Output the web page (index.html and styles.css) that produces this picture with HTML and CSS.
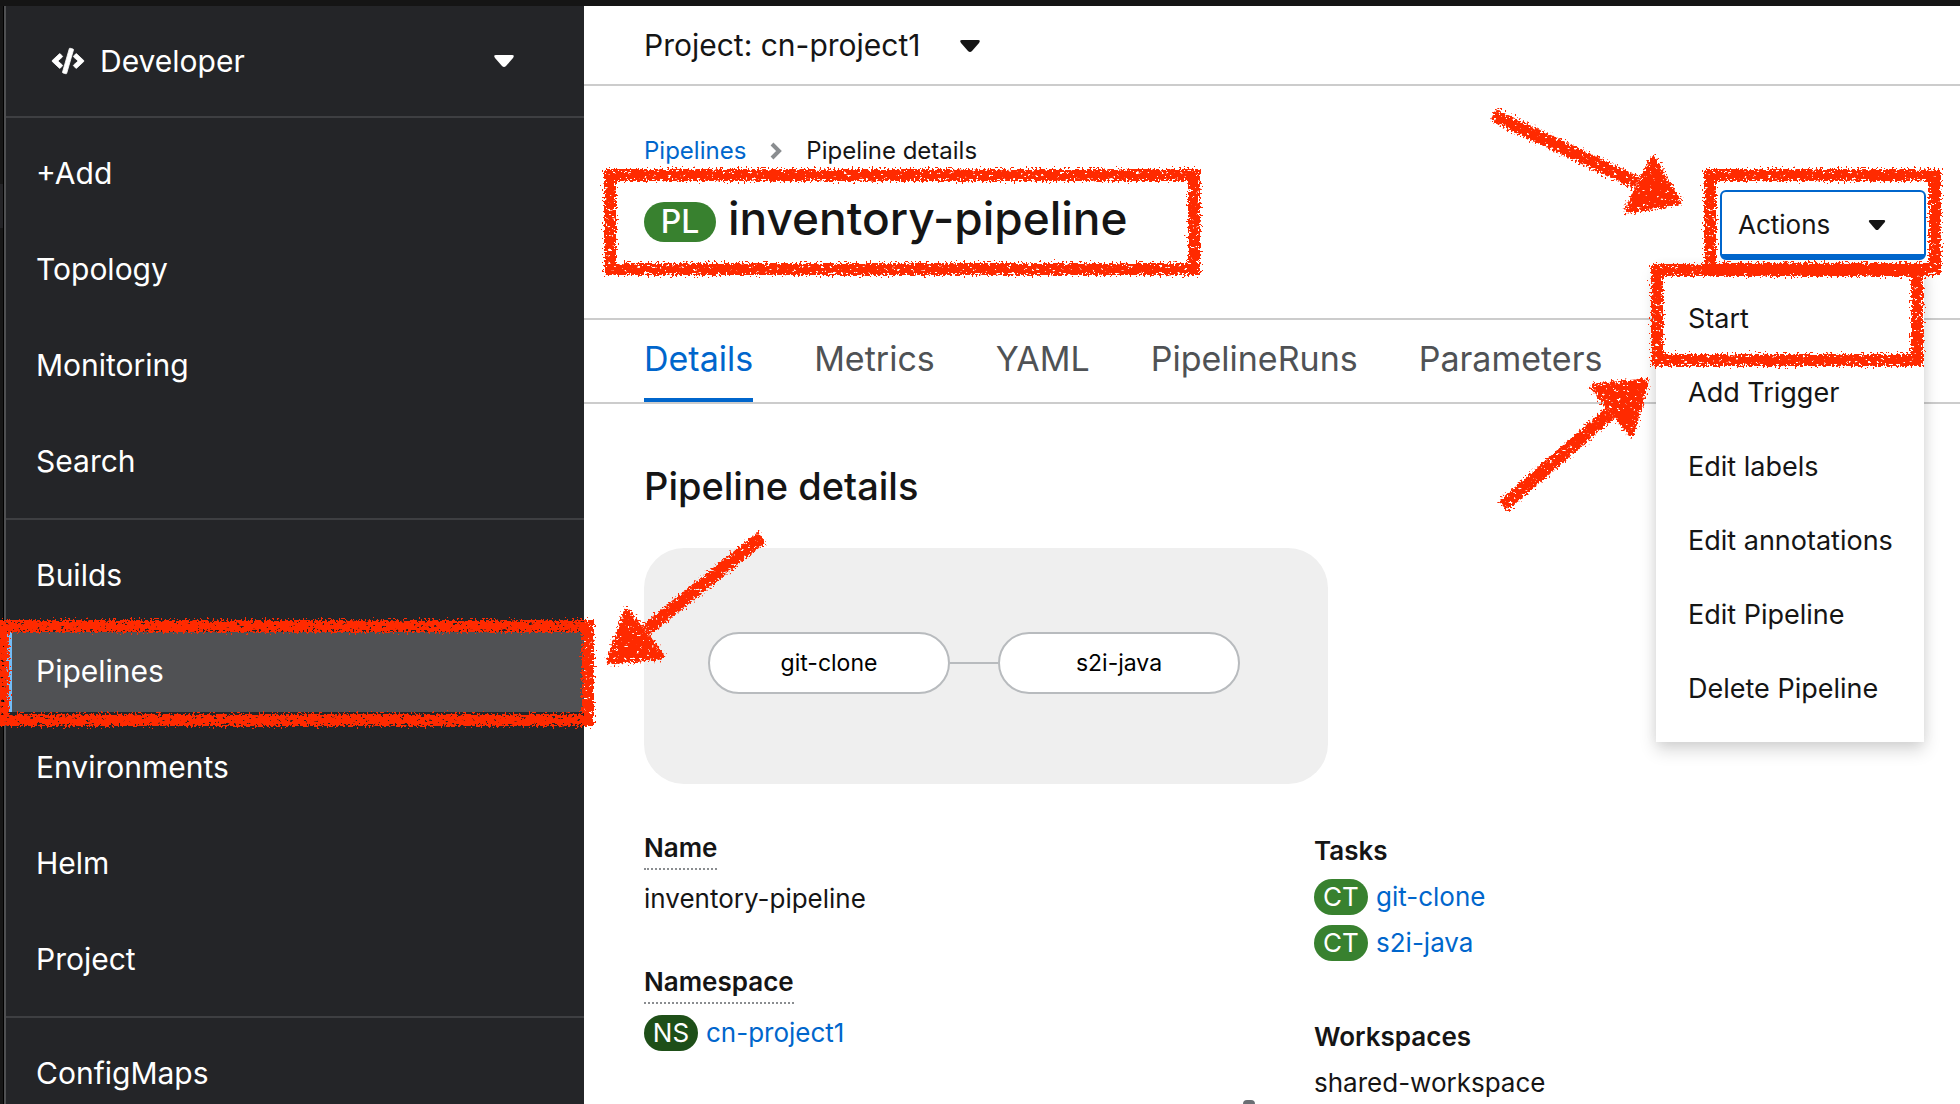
FILE: index.html
```html
<!DOCTYPE html>
<html lang="en">
<head>
<meta charset="utf-8">
<title>inventory-pipeline · Pipeline details</title>
<link rel="stylesheet" href="styles.css">
</head>
<body>
<svg class="defs" aria-hidden="true">
  <filter id="chalk" x="-5%" y="-15%" width="110%" height="130%">
    <feTurbulence type="fractalNoise" baseFrequency="0.5" numOctaves="2" seed="7" result="noise"/>
    <feDisplacementMap in="SourceGraphic" in2="noise" scale="12" xChannelSelector="R" yChannelSelector="G" result="rough"/>
    <feTurbulence type="fractalNoise" baseFrequency="0.25 0.35" numOctaves="3" seed="21" result="grain"/>
    <feColorMatrix in="grain" type="matrix" values="0 0 0 0 0  0 0 0 0 0  0 0 0 0 0  14 0 0 0 -3.5" result="mask"/>
    <feComposite in="rough" in2="mask" operator="in"/>
  </filter>
</svg>
<div class="topbar"></div>
<div class="app">
  <div class="edge"></div>
  <aside class="sidebar">
    <button class="perspective" type="button">
      <svg class="code-icon" viewBox="0 0 640 512" fill="currentColor" stroke="currentColor" stroke-width="16" aria-hidden="true"><path d="M278.900 511.500l-61-17.700c-6.400-1.800-10-8.500-8.200-14.900L346.200 8.700c1.800-6.400 8.500-10 14.900-8.200l61 17.700c6.400 1.800 10 8.500 8.200 14.900L293.800 503.300c-1.900 6.400-8.500 10.100-14.900 8.200zm-114-112.200l43.500-46.400c4.600-4.900 4.300-12.700-.8-17.200L117 256l90.600-79.700c5.100-4.500 5.500-12.300.8-17.200l-43.500-46.400c-4.500-4.800-12.100-5.100-17-.5L3.800 247.200c-5.100 4.700-5.100 12.800 0 17.500l144.100 135.100c4.900 4.600 12.500 4.400 17-.5zm327.200.6l144.100-135.100c5.100-4.700 5.100-12.800 0-17.500L492.100 112.100c-4.800-4.500-12.400-4.300-17 .5L431.600 159c-4.600 4.900-4.300 12.700.8 17.200L523 256l-90.600 79.700c-5.100 4.500-5.500 12.300-.8 17.200l43.500 46.400c4.500 4.900 12.100 5.100 17 .6z"/></svg>
      <span>Developer</span>
      <svg class="caret" viewBox="0 0 20 12" fill="currentColor" aria-hidden="true"><path d="M2 0h16q3 0 1 3l-7 8q-2 2-4 0L1 3q-2-3 1-3z"/></svg>
    </button>
    <nav>
      <ul class="nav-group">
        <li><a href="#">+Add</a></li>
        <li><a href="#">Topology</a></li>
        <li><a href="#">Monitoring</a></li>
        <li><a href="#">Search</a></li>
      </ul>
      <ul class="nav-group">
        <li><a href="#">Builds</a></li>
        <li class="current"><a href="#" aria-current="page">Pipelines</a><span class="mark mark-nav"></span></li>
        <li><a href="#">Environments</a></li>
        <li><a href="#">Helm</a></li>
        <li><a href="#">Project</a></li>
      </ul>
      <ul class="nav-group">
        <li><a href="#">ConfigMaps</a></li>
      </ul>
    </nav>
  </aside>
  <main class="main">
    <div class="project-bar">
      <button class="project" type="button">Project: cn-project1
        <svg class="caret" viewBox="0 0 20 12" fill="currentColor" aria-hidden="true"><path d="M2 0h16q3 0 1 3l-7 8q-2 2-4 0L1 3q-2-3 1-3z"/></svg>
      </button>
    </div>
    <header class="page-header">
      <nav class="breadcrumb" aria-label="Breadcrumb">
        <a href="#">Pipelines</a>
        <svg class="chevron" viewBox="0 0 12 18" fill="none" stroke="currentColor" stroke-width="4" aria-hidden="true"><path d="M2 2l7 7-7 7"/></svg>
        <span>Pipeline details</span>
      </nav>
      <div class="title-row">
        <h1 class="title"><span class="badge badge-large">PL</span>inventory-pipeline<span class="mark mark-title"></span></h1>
        <div class="actions">
          <button class="actions-toggle" type="button" aria-expanded="true">Actions
            <svg class="caret-small" viewBox="0 0 20 12" fill="currentColor" aria-hidden="true"><path d="M2 0h16q3 0 1 3l-7 8q-2 2-4 0L1 3q-2-3 1-3z"/></svg>
          </button>
          <ul class="menu">
            <li><button type="button">Start</button></li>
            <li><button type="button">Add Trigger</button></li>
            <li><button type="button">Edit labels</button></li>
            <li><button type="button">Edit annotations</button></li>
            <li><button type="button">Edit Pipeline</button></li>
            <li><button type="button">Delete Pipeline</button></li>
          </ul>
          <span class="mark mark-actions"></span>
          <span class="mark mark-start"></span>
          <svg class="arrows" viewBox="0 0 220 440" aria-hidden="true"><g class="chalk"><path class="shaft" d="M16 25L160 93M26 416L133 323"/><path class="head" d="M201 112L176 70L151 120ZM168 292L117 297L154 343Z"/></g></svg>
        </div>
      </div>
    </header>
    <nav class="tabs" aria-label="Pipeline">
      <a class="active" href="#">Details</a>
      <a href="#">Metrics</a>
      <a href="#">YAML</a>
      <a href="#">PipelineRuns</a>
      <a href="#">Parameters</a>
    </nav>
    <section class="details">
      <h2>Pipeline details</h2>
      <div class="graph">
        <div class="node">git-clone</div>
        <div class="link"></div>
        <div class="node">s2i-java</div>
        <svg class="arrow-nav" viewBox="0 0 200 160" aria-hidden="true"><g class="chalk"><path class="shaft" d="M162 17L46 110"/><path class="head" d="M10 141L27 92L61 136Z"/></g></svg>
      </div>
      <div class="columns">
        <dl class="facts">
          <dt><span>Name</span></dt>
          <dd>inventory-pipeline</dd>
          <dt><span>Namespace</span></dt>
          <dd><span class="badge badge-dark">NS</span><a href="#">cn-project1</a></dd>
        </dl>
        <dl class="resources">
          <dt>Tasks</dt>
          <dd><span class="badge">CT</span><a href="#">git-clone</a></dd>
          <dd><span class="badge">CT</span><a href="#">s2i-java</a></dd>
          <dt>Workspaces</dt>
          <dd>shared-workspace</dd>
        </dl>
      </div>
    </section>
    <span class="scroll-hint"></span>
  </main>
</div>
</body>
</html>
```
FILE: styles.css
```css
* { box-sizing: border-box; }

body {
  margin: 0;
  height: 100vh;
  overflow: hidden;
  display: flex;
  flex-direction: column;
  font-family: Inter, "Liberation Sans", sans-serif;
  font-size: 26px;
  color: #151515;
  background: #fff;
}

ul, dl, dd, h1, h2 { margin: 0; padding: 0; }
ul { list-style: none; }
button {
  margin: 0;
  padding: 0;
  border: 0;
  background: none;
  font: inherit;
  color: inherit;
  text-align: left;
}
a { color: #06c; text-decoration: none; }
.defs { position: absolute; width: 0; height: 0; }

.topbar { flex: none; height: 6px; background: #151515; }
.app { flex: 1; min-height: 0; display: flex; }
.edge {
  flex: none;
  width: 4px;
  border-right: 1px solid #000;
  background: linear-gradient(#171717 178px, #242427 178px, #242427 222px, #171717 222px);
}

/* Sidebar */
.sidebar {
  flex: none;
  width: 580px;
  border-left: 2px solid #4f5052;
  background: #242528;
  color: #fff;
  font-size: 30px;
}
.perspective {
  display: flex;
  align-items: center;
  gap: 16px;
  width: 100%;
  height: 110px;
  padding: 0 70px 0 46px;
}
.code-icon { width: 32px; height: 26px; overflow: visible; }
.caret { width: 20px; height: 12px; }
.perspective .caret { margin-left: auto; }
.nav-group {
  display: flex;
  flex-direction: column;
  gap: 16px;
  padding: 16px 0;
  border-top: 2px solid #3e3f42;
}
.nav-group li { position: relative; }
.nav-group a {
  display: block;
  padding: 0 30px 2px;
  line-height: 78px;
  color: #fff;
}
.nav-group .current { z-index: 2; }
.nav-group .current a {
  padding-left: 24px;
  border-left: 6px solid #73bcf7;
  background: #505154;
}

/* Main column */
.main { position: relative; flex: 1; min-width: 0; }
.project-bar { border-bottom: 2px solid #ccc; padding: 0 60px; }
.project {
  display: flex;
  align-items: center;
  gap: 40px;
  height: 78px;
  font-size: 30px;
}
.project .caret { margin-top: 2px; }
.page-header { padding: 44px 34px 58px 60px; border-bottom: 2px solid #ccc; }
.breadcrumb {
  display: flex;
  align-items: center;
  gap: 24px;
  font-size: 24px;
  line-height: 42px;
}
.chevron { width: 12px; height: 18px; color: #8a8d90; }
.title-row {
  display: flex;
  justify-content: space-between;
  align-items: flex-start;
  margin-top: 18px;
}
.title {
  position: relative;
  display: flex;
  align-items: center;
  gap: 12px;
  font-size: 46px;
  font-weight: 500;
  line-height: 56px;
}
.badge {
  display: inline-flex;
  align-items: center;
  justify-content: center;
  width: 54px;
  height: 36px;
  border-radius: 18px;
  background: #38812f;
  color: #fff;
  font-size: 26px;
  line-height: 36px;
}
.badge-large { width: 72px; height: 40px; margin-top: 8px; border-radius: 20px; font-size: 32px; }
.badge-dark { background: #1e4f18; }

.actions { position: relative; }
.actions-toggle {
  display: flex;
  align-items: center;
  justify-content: space-between;
  width: 206px;
  height: 70px;
  padding: 2px 38px 0 16px;
  border: 2px solid #06c;
  border-bottom-width: 6px;
  border-radius: 6px;
  font-size: 26px;
}
.caret-small { width: 18px; height: 10px; margin-top: 2px; }
.menu {
  position: absolute;
  z-index: 1;
  top: 76px;
  right: 2px;
  width: 268px;
  padding: 16px 0;
  background: #fff;
  box-shadow: 0 8px 16px rgba(3, 3, 3, .16), 0 0 12px rgba(3, 3, 3, .06);
}
.menu button {
  display: block;
  width: 100%;
  padding-left: 32px;
  font-size: 27px;
  line-height: 74px;
  white-space: nowrap;
}

.tabs {
  display: flex;
  gap: 61px;
  padding: 0 60px;
  border-bottom: 2px solid #ccc;
  font-size: 34px;
}
.tabs a {
  line-height: 78px;
  border-bottom: 4px solid transparent;
  color: #4f5255;
}
.tabs .active { color: #06c; border-color: #06c; }

.details { padding: 56px 36px 0 60px; }
.details h2 { font-size: 38px; font-weight: 500; line-height: 52px; }
.graph {
  position: relative;
  display: flex;
  align-items: center;
  width: 684px;
  height: 236px;
  margin-top: 36px;
  padding: 0 64px 6px;
  border-radius: 40px;
  background: #efefef;
}
.node {
  width: 242px;
  border: 2px solid #b8bbbe;
  border-radius: 31px;
  background: #fff;
  color: #000;
  font-size: 23px;
  line-height: 58px;
  text-align: center;
}
.link { width: 48px; height: 2px; background: #b8bbbe; }
.columns {
  display: grid;
  grid-template-columns: 1fr 1fr;
  gap: 60px;
  margin-top: 44px;
  font-size: 26px;
  line-height: 46px;
}
dt { font-weight: 600; }
dd { display: flex; align-items: center; gap: 8px; }
.facts dt { display: flex; line-height: 40px; }
.facts dt span { border-bottom: 2px dotted #8a8d90; }
.facts dd { margin-top: 6px; }
dd + dt { margin-top: 40px; }
.resources dd + dt { margin-top: 48px; }
.scroll-hint {
  position: absolute;
  bottom: 0;
  left: 659px;
  width: 12px;
  height: 4px;
  border-radius: 6px 6px 0 0;
  background: #6a6e73;
}

/* Hand-drawn callouts */
.mark {
  position: absolute;
  z-index: 3;
  border: 12px solid #ff2a00;
  filter: url(#chalk);
  pointer-events: none;
}
.mark-nav { inset: -12px -10px -14px -9px; }
.mark-title { inset: -21px -72px -29px -40px; }
.mark-actions { inset: -21px -15px -15px -16px; }
.mark-start { top: 74px; right: 3px; width: 272px; height: 102px; }
.arrows, .arrow-nav { position: absolute; z-index: 3; pointer-events: none; }
.arrows { top: -100px; right: 229px; width: 220px; height: 440px; }
.arrow-nav { top: -28px; left: -44px; width: 200px; height: 160px; }
.chalk { filter: url(#chalk); }
.shaft { fill: none; stroke: #ff2a00; stroke-width: 13; }
.head { fill: #ff2a00; stroke: #ff2a00; stroke-width: 7; stroke-linejoin: round; }
```
